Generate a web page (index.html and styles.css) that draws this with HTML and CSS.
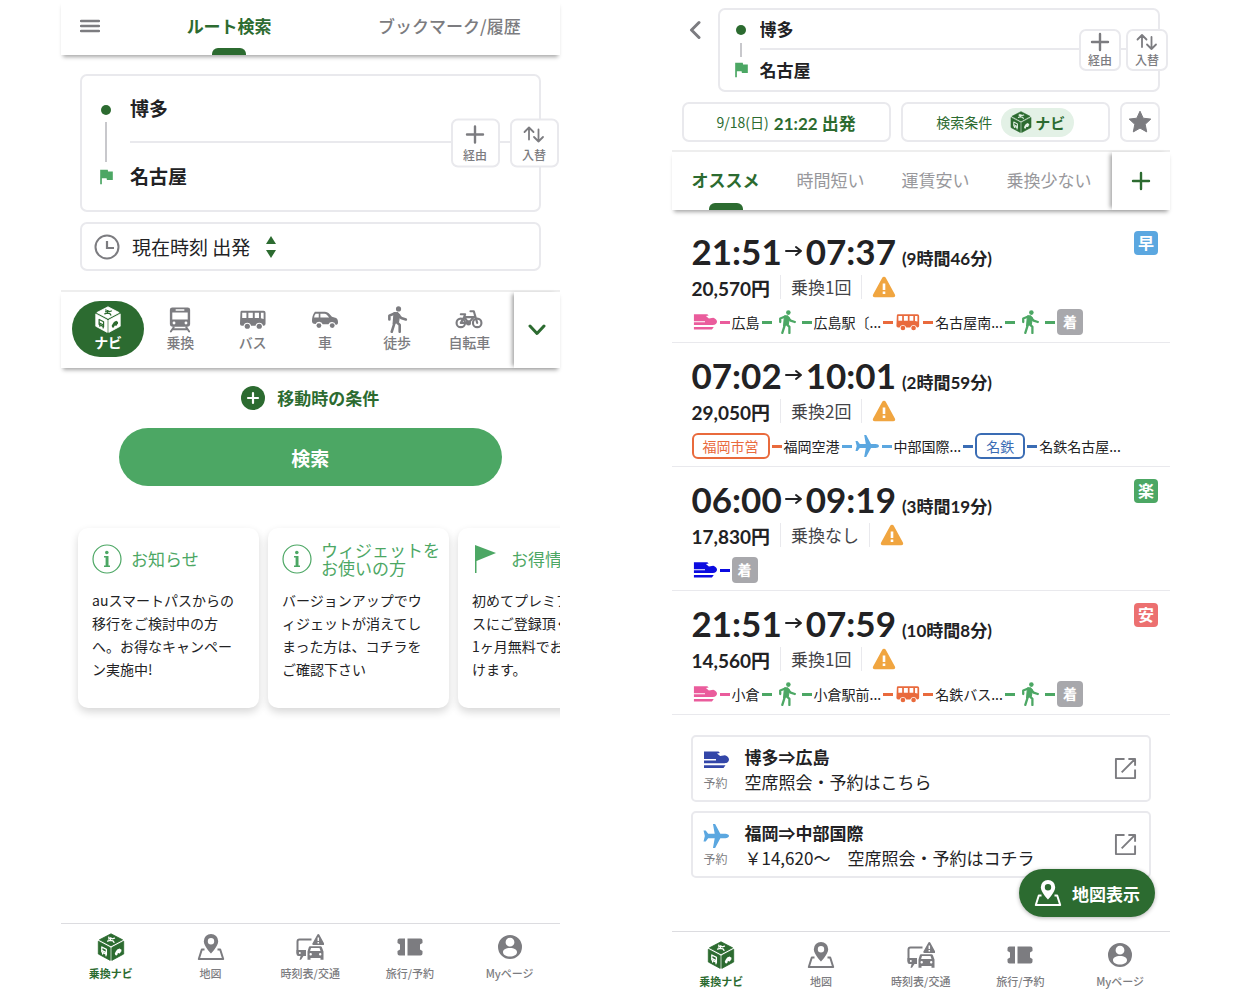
FILE: index.html
```html
<!DOCTYPE html>
<html lang="ja">
<head>
    <meta charset="UTF-8">
    <meta name="viewport" content="width=device-width, initial-scale=1.0">
    <title>乗換ナビ</title>
    <link rel="stylesheet" href="styles.css">
</head>
<body>
    <!-- Icon sprite -->
    <svg class="sprite" aria-hidden="true">
        <symbol id="i-cube" viewBox="0 0 28 28">
            <path fill="currentColor" stroke="currentColor" stroke-width=".8" stroke-linejoin="round" d="M14 .8 25.600 6.800 14 12.900 2.400 6.800zM1.300 8.200 13.200 14.600V27.400L1.300 21zM26.700 8.200 14.800 14.600V27.400L26.700 21z"/>
            <g class="cut-line" fill="none" stroke-width="1.300" stroke-linecap="round" stroke-linejoin="round">
                <path d="M11.500 6l2-1.200 1.800 1 2.200-.6M14 5.400l-1 2 3 .5 1 1.500M13 7.400l-2.400.8"/>
                <path d="M4.800 14l4.600 2.400v5L4.800 19z"/>
                <path d="M5.200 17.600l4 2.100M5.600 20v1M9 21.800v1"/>
            </g>
            <path class="cut-fill" d="M17.800 20.600l1-2 1.400-2 2.400-1.200 1 .8.8.4v1.800l-.9.500a1.200 1.200 0 0 1-2 1.200l-1.100.6a1.200 1.200 0 0 1-2.200 1z"/>
            <circle class="cut-fill" cx="11.800" cy="4.200" r=".8"/>
        </symbol>
        <symbol id="i-train" viewBox="0 0 28 28">
            <path fill="currentColor" fill-rule="evenodd" d="M6 1.500h16a2.500 2.500 0 0 1 2.500 2.500v15a2.500 2.500 0 0 1-2.500 2.500H6A2.500 2.500 0 0 1 3.500 19V4A2.500 2.500 0 0 1 6 1.500zM9.500 3.300v1.600h9V3.300zM6 6.800v7.200h16V6.800zM7.800 16.200a1.500 1.500 0 1 0 0 3 1.500 1.500 0 0 0 0-3zM20.200 16.200a1.500 1.500 0 1 0 0 3 1.500 1.500 0 0 0 0-3z"/>
            <path fill="none" stroke="currentColor" stroke-width="2" stroke-linecap="round" d="M7.500 22 4.500 26.500M20.500 22l3 4.500M7 24.200h14"/>
        </symbol>
        <symbol id="i-bus" viewBox="0 0 28 28">
            <path fill="currentColor" fill-rule="evenodd" d="M2 5h23a2 2 0 0 1 2 2v11.500a2 2 0 0 1-2 2h-.6a4 4 0 0 0-7.800 0h-4.600a4 4 0 0 0-7.800 0H2.500a2 2 0 0 1-2-2l.500-12A1.500 1.500 0 0 1 2 5zM2.800 7v5.500h4.400V7zM9.200 7v5.500h4.600V7zM15.800 7v5.500h4.400V7zM22.200 7v5.800l2.800.600V7z"/>
            <circle cx="8.100" cy="21" r="2.700" fill="currentColor"/>
            <circle cx="20.500" cy="21" r="2.700" fill="currentColor"/>
        </symbol>
        <symbol id="i-car" viewBox="0 0 28 28">
            <path fill="currentColor" fill-rule="evenodd" d="M3.500 6h10.500c3 0 5 2.600 7.200 5.200l4.300 1.200c1.500.6 2 2.600 2 4.600 0 1.800-.8 2.500-2.500 2.500a3.900 3.900 0 0 0-7.400-.5h-6a3.900 3.900 0 0 0-7.300-.3C1.500 18.500.5 17.500.5 15.500c0-3 .7-6.500 3-9.500zM4.300 8c-1 1.200-1.500 2.600-1.600 3.800h4.800V8zM9.200 8v3.800h9C16.600 9.600 15.200 8 13.500 8z"/>
            <circle cx="7.700" cy="20.300" r="2.500" fill="currentColor"/>
            <circle cx="21.500" cy="20.300" r="2.500" fill="currentColor"/>
        </symbol>
        <symbol id="i-walk" viewBox="1 1 23 23">
            <circle cx="13.800" cy="3.500" r="2.200" fill="currentColor"/>
            <path fill="none" stroke="currentColor" stroke-width="2.200" stroke-linecap="round" stroke-linejoin="round" d="M6 12.500V9.200L10.800 7.200M14 9l2 2.200 4 1.300M8 23l2.200-7M12.200 14.500l2.600 2.700V23"/>
            <path fill="currentColor" stroke="currentColor" stroke-width="1" stroke-linejoin="round" d="M10 6.800l3-.2 1.800 2-1 6-4.600 1.600z"/>
        </symbol>
        <symbol id="i-bike" viewBox="0 0 28 28">
            <g fill="none" stroke="currentColor" stroke-width="2.200" stroke-linecap="round" stroke-linejoin="round">
                <circle cx="5.500" cy="17.500" r="4.400"/>
                <circle cx="22.500" cy="17.500" r="4.400"/>
                <path d="M5.500 17.500 9 11.500h10M5.500 17.500h8L19.500 11M9 11.500l4.500 6M15.500 5.500h3.500l3.500 12M5.500 8.500h4.500l-1 3"/>
                <circle cx="13.500" cy="17.500" r="1.500"/>
            </g>
        </symbol>
        <symbol id="i-map" viewBox="0 0 28 28">
            <path fill="currentColor" fill-rule="evenodd" d="M14 1a7.200 7.200 0 0 1 7.200 7.200C21.200 13 14 20.500 14 20.500S6.800 13 6.800 8.200A7.200 7.200 0 0 1 14 1zM14 5a3.200 3.200 0 1 0 0 6.400A3.200 3.200 0 0 0 14 5z"/>
            <path fill="none" stroke="currentColor" stroke-width="2" stroke-linejoin="round" d="M7.500 16.500H4.800L1.800 26h24.400l-3-9.500h-2.700"/>
        </symbol>
        <symbol id="i-traffic" viewBox="0 0 28 28">
            <path fill="none" stroke="currentColor" stroke-width="2" stroke-linejoin="round" d="M15.500 6.500H3.500a2 2 0 0 0-2 2v12"/>
            <path fill="currentColor" d="M.5 17h9.500v6H7.500L5 26.800H3.500L4.600 23H2.500a2 2 0 0 1-2-2zM22.300 1a1 1 0 0 1 .9.500l5 9a1 1 0 0 1-.9 1.500H17.300a1 1 0 0 1-.9-1.500l5-9a1 1 0 0 1 .9-.5z"/>
            <path class="cut-line" stroke-width="1.500" d="M22.300 4.500v3.500M22.300 9v1.500"/>
            <circle class="cut-fill" cx="3.800" cy="20" r="1"/>
            <path fill="currentColor" fill-rule="evenodd" d="M14 13.300h10.500a1.500 1.500 0 0 1 1.400 1l1.600 4.200v8.300h-3V25H14.500v1.800h-3V18.500l1.300-4.200a1.500 1.500 0 0 1 1.200-1zM15 15.100l-.9 2.900h10.400l-1-2.900zM14.700 20a1.200 1.200 0 1 0 0 2.400 1.200 1.200 0 0 0 0-2.400zM24.200 20a1.200 1.200 0 1 0 0 2.400 1.200 1.200 0 0 0 0-2.400z"/>
        </symbol>
        <symbol id="i-ticket" viewBox="0 0 28 28">
            <path fill="currentColor" d="M3.500 5.500H9v17H3.500a2 2 0 0 1-2-2v-2.500l2.500-1.500v-5L1.500 10V7.500a2 2 0 0 1 2-2zM11.500 5.500h13a2 2 0 0 1 2 2V10L24 11.500v5l2.500 1.500v2.500a2 2 0 0 1-2 2h-13z"/>
        </symbol>
        <symbol id="i-user" viewBox="0 0 28 28">
            <path fill="currentColor" fill-rule="evenodd" d="M14 2a12 12 0 1 1 0 24 12 12 0 0 1 0-24zM14 4.800a4.400 4.400 0 1 0 0 8.800 4.400 4.400 0 0 0 0-8.800zM14 15c-4.500 0-7 1.800-7 4.200S10 23.500 14 23.500s7-1.900 7-4.300S18.500 15 14 15z"/>
        </symbol>
        <symbol id="i-flag" viewBox="4 3 17 19">
            <path fill="currentColor" d="M14.400 6 14 4H5v17h2v-7h5.600l.4 2h7V6z"/>
        </symbol>
        <symbol id="i-shinkansen" viewBox="0 0 26 26">
            <path fill="currentColor" d="M1 4.500h14.500l1.500 1.400-3 .6 3.200 2.600 4.800-.8c2.500.8 4 2.500 4 4.200 0 2.300-1.800 3.700-4.500 3.700H1v-2.800h12v-1.300H1zM1 18.300h21.500l-2 2.700H1z"/>
        </symbol>
        <symbol id="i-plane" viewBox="0 0 24 24">
            <path fill="currentColor" transform="rotate(90 12 12)" d="M23 14.800v-2l-9-4.800V3.300C14 1.600 13.100 0 12 0s-2 1.600-2 3.300V8L1 12.800v2l9-1.600v6l-3 2.300v2l5-1.200 5 1.200v-2l-3-2.300v-6z"/>
        </symbol>
        <symbol id="i-plus" viewBox="0 0 20 20">
            <path fill="none" stroke="currentColor" stroke-width="2.400" stroke-linecap="round" d="M10 2v16M2 10h16"/>
        </symbol>
        <symbol id="i-swap" viewBox="0 0 24 20">
            <path fill="none" stroke="currentColor" stroke-width="1.800" stroke-linecap="round" stroke-linejoin="round" d="M7 15V3M2.500 7.500 7 3l4.500 4.500M16.500 5v12M12 12.500l4.500 4.500 4.500-4.500"/>
        </symbol>
        <symbol id="i-warn" viewBox="0 0 24 22">
            <path fill="currentColor" d="M12 .8c.9 0 1.500.4 1.900 1.100l9 16.500c.8 1.400 0 2.800-1.700 2.800H2.800c-1.700 0-2.500-1.400-1.700-2.800l9-16.500C10.500 1.200 11.100.8 12 .8z"/>
            <path stroke="#fff" stroke-width="2.600" d="M12 7.500v6.500M12 15.500v2.400"/>
        </symbol>
        <symbol id="i-open" viewBox="0 0 24 24">
            <path fill="none" stroke="currentColor" stroke-width="2" stroke-linejoin="round" d="M11 2H2v20h20v-9M15 2h7v7M22 2 8 16"/>
        </symbol>
        <symbol id="i-info" viewBox="0 0 30 30">
            <circle cx="15" cy="15" r="14" fill="none" stroke="currentColor" stroke-width="1.200"/>
            <circle cx="14.800" cy="8.500" r="1.800" fill="currentColor"/>
            <path fill="currentColor" d="M12 12h4.500v9.500H18V23h-6v-1.500h1.600v-8H12z"/>
        </symbol>
    </svg>

    <main class="screens">
        <!-- Search screen -->
        <section class="phone">
            <header class="topbar">
                <button type="button" class="menu-btn" aria-label="メニュー">
                    <svg width="20" height="14" viewBox="0 0 20 14"><path stroke="currentColor" stroke-width="2.400" stroke-linecap="round" d="M1 2h18M1 7h18M1 12h18"/></svg>
                </button>
                <a href="#" class="top-tab active">ルート検索</a>
                <a href="#" class="top-tab">ブックマーク/履歴</a>
            </header>

            <div class="search-form">
                <div class="stations">
                    <div class="station">
                        <span class="marker"><span class="dot"></span></span>
                        <input type="text" value="博多" aria-label="出発地">
                    </div>
                    <div class="station">
                        <span class="marker"><svg class="flag"><use href="#i-flag"/></svg></span>
                        <input type="text" value="名古屋" aria-label="目的地">
                    </div>
                    <div class="station-actions">
                        <button type="button"><svg class="act-icon"><use href="#i-plus"/></svg>経由</button>
                        <button type="button"><svg class="act-icon swap"><use href="#i-swap"/></svg>入替</button>
                    </div>
                </div>

                <div class="time-box">
                    <svg width="26" height="26" viewBox="0 0 26 26" fill="none" stroke="currentColor" stroke-width="2"><circle cx="13" cy="13" r="11.500"/><path stroke-width="2.200" d="M13 7v7h7"/></svg>
                    <select aria-label="日時">
                        <option>現在時刻 出発</option>
                    </select>
                    <svg class="updown" width="10" height="24" viewBox="0 0 10 24"><path fill="currentColor" d="M5 1l5 8H0zM5 23l5-8H0z"/></svg>
                </div>
            </div>

            <div class="modes">
                <div class="mode-list">
                    <button type="button" class="mode active"><svg><use href="#i-cube"/></svg>ナビ</button>
                    <button type="button" class="mode"><svg><use href="#i-train"/></svg>乗換</button>
                    <button type="button" class="mode"><svg><use href="#i-bus"/></svg>バス</button>
                    <button type="button" class="mode"><svg><use href="#i-car"/></svg>車</button>
                    <button type="button" class="mode"><svg><use href="#i-walk"/></svg>徒歩</button>
                    <button type="button" class="mode"><svg><use href="#i-bike"/></svg>自転車</button>
                </div>
                <button type="button" class="side-btn narrow" aria-label="開く">
                    <svg width="18" height="12" viewBox="0 0 18 12"><path fill="none" stroke="currentColor" stroke-width="3" stroke-linecap="round" stroke-linejoin="round" d="M2 2l7 7.500L16 2"/></svg>
                </button>
            </div>

            <button type="button" class="conditions">
                <svg width="24" height="24" viewBox="0 0 24 24"><circle cx="12" cy="12" r="12" fill="currentColor"/><path stroke="#fff" stroke-width="2.200" stroke-linecap="round" d="M12 7v10M7 12h10"/></svg>
                移動時の条件
            </button>
            <button type="button" class="search-btn">検索</button>

            <div class="cards">
                <article class="card">
                    <h2><svg width="30" height="30"><use href="#i-info"/></svg>お知らせ</h2>
                    <p>auスマートパスからの<br>移行をご検討中の方<br>へ。お得なキャンペー<br>ン実施中!</p>
                </article>
                <article class="card">
                    <h2><svg width="30" height="30"><use href="#i-info"/></svg><span>ウィジェットを<br>お使いの方</span></h2>
                    <p>バージョンアップでウ<br>ィジェットが消えてし<br>まった方は、コチラを<br>ご確認下さい</p>
                </article>
                <article class="card">
                    <h2><svg width="30" height="30" viewBox="0 0 30 30"><path fill="currentColor" d="M3 1l21 8L4.500 17v12H3z"/></svg>お得情報</h2>
                    <p>初めてプレミアムコー<br>スにご登録頂くと最初<br>1ヶ月無料でお試し頂<br>けます。</p>
                </article>
            </div>

            <nav class="bottom-nav tall">
                <a href="#" class="active"><svg><use href="#i-cube"/></svg>乗換ナビ</a>
                <a href="#"><svg><use href="#i-map"/></svg>地図</a>
                <a href="#"><svg><use href="#i-traffic"/></svg>時刻表/交通</a>
                <a href="#"><svg><use href="#i-ticket"/></svg>旅行/予約</a>
                <a href="#"><svg><use href="#i-user"/></svg>Myページ</a>
            </nav>
        </section>

        <!-- Result screen -->
        <section class="phone">
            <div class="result-head">
                <button type="button" class="back-btn" aria-label="戻る">
                    <svg width="12" height="20" viewBox="0 0 12 20"><path fill="none" stroke="currentColor" stroke-width="3" stroke-linecap="round" stroke-linejoin="round" d="M10 2.500 2.500 10l7.500 7.500"/></svg>
                </button>
                <div class="stations compact">
                    <div class="station">
                        <span class="marker"><span class="dot"></span></span>
                        <input type="text" value="博多" aria-label="出発地">
                    </div>
                    <div class="station">
                        <span class="marker"><svg class="flag"><use href="#i-flag"/></svg></span>
                        <input type="text" value="名古屋" aria-label="目的地">
                    </div>
                    <div class="station-actions">
                        <button type="button"><svg class="act-icon"><use href="#i-plus"/></svg>経由</button>
                        <button type="button"><svg class="act-icon swap"><use href="#i-swap"/></svg>入替</button>
                    </div>
                </div>
            </div>

            <div class="chips">
                <button type="button" class="chip">9/18(日) <strong>21:22 出発</strong></button>
                <button type="button" class="chip">検索条件 <span class="navi-pill"><svg width="22" height="22"><use href="#i-cube"/></svg>ナビ</span></button>
                <button type="button" class="chip star" aria-label="ブックマーク">
                    <svg width="24" height="24" viewBox="0 0 24 24"><path fill="currentColor" stroke="currentColor" stroke-width="1" stroke-linejoin="round" d="M12 1.200l3.200 7 7.600.9-5.600 5.200 1.500 7.600L12 18.100l-6.700 3.800 1.500-7.600L1.200 9.100l7.600-.9z"/></svg>
                </button>
            </div>

            <div class="sorts">
                <div class="sort-list">
                    <a href="#" class="active">オススメ</a>
                    <a href="#">時間短い</a>
                    <a href="#">運賃安い</a>
                    <a href="#">乗換少ない</a>
                </div>
                <button type="button" class="side-btn" aria-label="追加">
                    <svg width="20" height="20"><use href="#i-plus"/></svg>
                </button>
            </div>

            <ul class="results">
                <li class="result">
                    <span class="badge fast">早</span>
                    <div class="times"><b>21:51</b><svg class="arrow" viewBox="0 0 18 14"><path d="M1 7h14M11 3l5 4-5 4"/></svg><b>07:37</b><small>(9時間46分)</small></div>
                    <div class="fare"><b>20,570円</b><span>乗換1回</span><svg><use href="#i-warn"/></svg></div>
                    <div class="route">
                        <svg class="pink"><use href="#i-shinkansen"/></svg><i class="pink"></i>広島<i class="walk"></i>
                        <svg class="walk"><use href="#i-walk"/></svg><i class="walk"></i>広島駅〔...<i class="bus"></i>
                        <svg class="bus"><use href="#i-bus"/></svg><i class="bus"></i>名古屋南...<i class="walk"></i>
                        <svg class="walk"><use href="#i-walk"/></svg><i class="walk"></i><span class="goal">着</span>
                    </div>
                </li>
                <li class="result">
                    <div class="times"><b>07:02</b><svg class="arrow" viewBox="0 0 18 14"><path d="M1 7h14M11 3l5 4-5 4"/></svg><b>10:01</b><small>(2時間59分)</small></div>
                    <div class="fare"><b>29,050円</b><span>乗換2回</span><svg><use href="#i-warn"/></svg></div>
                    <div class="route">
                        <span class="line-tag bus">福岡市営</span><i class="bus"></i>福岡空港<i class="air"></i>
                        <svg class="air"><use href="#i-plane"/></svg><i class="air"></i>中部国際...<i class="meitetsu"></i>
                        <span class="line-tag meitetsu">名鉄</span><i class="meitetsu"></i>名鉄名古屋...
                    </div>
                </li>
                <li class="result">
                    <span class="badge easy">楽</span>
                    <div class="times"><b>06:00</b><svg class="arrow" viewBox="0 0 18 14"><path d="M1 7h14M11 3l5 4-5 4"/></svg><b>09:19</b><small>(3時間19分)</small></div>
                    <div class="fare"><b>17,830円</b><span>乗換なし</span><svg><use href="#i-warn"/></svg></div>
                    <div class="route">
                        <svg class="blue"><use href="#i-shinkansen"/></svg><i class="blue"></i><span class="goal">着</span>
                    </div>
                </li>
                <li class="result">
                    <span class="badge cheap">安</span>
                    <div class="times"><b>21:51</b><svg class="arrow" viewBox="0 0 18 14"><path d="M1 7h14M11 3l5 4-5 4"/></svg><b>07:59</b><small>(10時間8分)</small></div>
                    <div class="fare"><b>14,560円</b><span>乗換1回</span><svg><use href="#i-warn"/></svg></div>
                    <div class="route">
                        <svg class="pink"><use href="#i-shinkansen"/></svg><i class="pink"></i>小倉<i class="walk"></i>
                        <svg class="walk"><use href="#i-walk"/></svg><i class="walk"></i>小倉駅前...<i class="bus"></i>
                        <svg class="bus"><use href="#i-bus"/></svg><i class="bus"></i>名鉄バス...<i class="walk"></i>
                        <svg class="walk"><use href="#i-walk"/></svg><i class="walk"></i><span class="goal">着</span>
                    </div>
                </li>
            </ul>

            <div class="bookings">
                <a href="#" class="booking">
                    <span class="booking-icon"><svg class="navy"><use href="#i-shinkansen"/></svg>予約</span>
                    <span class="booking-text"><strong>博多⇒広島</strong>空席照会・予約はこちら</span>
                    <svg class="open"><use href="#i-open"/></svg>
                </a>
                <a href="#" class="booking">
                    <span class="booking-icon"><svg class="air"><use href="#i-plane"/></svg>予約</span>
                    <span class="booking-text"><strong>福岡⇒中部国際</strong>￥14,620〜　空席照会・予約はコチラ</span>
                    <svg class="open"><use href="#i-open"/></svg>
                </a>
            </div>

            <button type="button" class="map-btn"><svg width="28" height="28"><use href="#i-map"/></svg>地図表示</button>

            <nav class="bottom-nav">
                <a href="#" class="active"><svg><use href="#i-cube"/></svg>乗換ナビ</a>
                <a href="#"><svg><use href="#i-map"/></svg>地図</a>
                <a href="#"><svg><use href="#i-traffic"/></svg>時刻表/交通</a>
                <a href="#"><svg><use href="#i-ticket"/></svg>旅行/予約</a>
                <a href="#"><svg><use href="#i-user"/></svg>Myページ</a>
            </nav>
        </section>
    </main>
</body>
</html>
```

FILE: styles.css
```css
:root {
    --green: #2c6b30;
    --light-green: #4ca764;
    --grey: #7c7c80;
    --text: #222224;
    --line: #e9e9ed;
    --cut: #fff;
}
* {
    box-sizing: border-box;
}
body {
    margin: 0;
    background: #fff;
    color: var(--text);
    font-family: "Noto Sans CJK JP", sans-serif;
}
button,
input,
select {
    font: inherit;
    color: inherit;
    background: none;
    border: 0;
    padding: 0;
    margin: 0;
}
button {
    cursor: pointer;
}
a {
    color: inherit;
    text-decoration: none;
}
svg {
    display: block;
    flex: none;
}
.sprite {
    position: absolute;
    width: 0;
    height: 0;
}
.cut-line {
    stroke: var(--cut);
}
.cut-fill {
    fill: var(--cut);
}
.screens {
    display: grid;
    grid-template-columns: 1fr 1fr;
    gap: 112px;
    padding: 0 68px 0 61px;
}
.phone {
    position: relative;
    display: flex;
    flex-direction: column;
    min-width: 0;
    min-height: 100vh;
}

/* Top tabs */
.topbar {
    display: flex;
    height: 55px;
    box-shadow: 0 4px 4px -2px rgba(0, 0, 0, 0.35);
}
.menu-btn {
    display: flex;
    align-items: center;
    justify-content: center;
    width: 58px;
    padding-bottom: 3px;
    color: var(--grey);
}
.top-tab {
    flex: 1;
    position: relative;
    text-align: center;
    font-size: 17px;
    line-height: 51px;
    font-weight: 500;
    color: var(--grey);
}
.top-tab.active {
    color: var(--green);
    font-weight: 700;
}
.top-tab.active::after,
.sort-list .active::after {
    content: "";
    position: absolute;
    left: 50%;
    bottom: 0;
    width: 34px;
    height: 7px;
    margin-left: -17px;
    border-radius: 6px 6px 0 0;
    background: var(--green);
}

/* Station box */
.search-form {
    display: flex;
    flex-direction: column;
    gap: 10px;
    padding: 19px 19px;
}
.stations,
.time-box,
.chip,
.booking {
    border: 2px solid var(--line);
    border-radius: 7px;
}
.stations {
    position: relative;
    flex: 1;
    padding: 0 0 0 15px;
}
.station {
    position: relative;
    display: flex;
    align-items: center;
    height: 67px;
}
.station input {
    flex: 1;
    min-width: 0;
    height: 100%;
    padding-bottom: 2px;
    font-size: 19px;
    font-weight: 700;
}
.station:first-child input {
    border-bottom: 2px solid var(--line);
}
.station:first-child::after {
    content: "";
    position: absolute;
    left: 8px;
    bottom: -19px;
    width: 2px;
    height: 40px;
    background: #c8c8cc;
}
.marker {
    width: 33px;
    padding-left: 4px;
}
.dot {
    display: block;
    width: 10px;
    height: 10px;
    border-radius: 50%;
    background: var(--green);
}
.flag {
    width: 15px;
    height: 16px;
    margin-left: -2px;
    color: var(--light-green);
}
.station-actions {
    position: absolute;
    right: -20px;
    top: 50%;
    transform: translateY(-50%);
    display: flex;
    gap: 10px;
}
.station-actions button {
    display: flex;
    flex-direction: column;
    align-items: center;
    justify-content: center;
    gap: 2px;
    width: 49px;
    height: 49px;
    border: 2px solid var(--line);
    border-radius: 7px;
    background: #fff;
    color: var(--grey);
    font-size: 12px;
    line-height: 16px;
    font-weight: 500;
}
.act-icon {
    width: 20px;
    height: 20px;
}
.act-icon.swap {
    width: 24px;
}
.compact {
    padding-left: 12px;
}
.compact .station {
    height: 40px;
}
.compact .station input {
    font-size: 17px;
}
.compact .station:first-child::after {
    bottom: -7px;
    height: 14px;
}
.compact .marker {
    width: 28px;
}
.compact .station-actions {
    right: -10px;
    gap: 5px;
}
.compact .station-actions button {
    width: 42px;
    height: 42px;
    gap: 0;
}

.time-box {
    display: flex;
    align-items: center;
    height: 49px;
    padding-left: 12px;
    color: var(--grey);
}
.time-box select {
    appearance: none;
    margin: 0 15px 0 12px;
    font-size: 19px;
    color: var(--text);
}
.updown {
    color: var(--green);
}

/* Transport modes */
.modes,
.sorts {
    display: flex;
    border-top: 2px solid #eee;
    box-shadow: 0 4px 4px -2px rgba(0, 0, 0, 0.35);
}
.modes {
    height: 78px;
}
.mode-list {
    flex: 1;
    display: grid;
    grid-template-columns: repeat(6, 1fr);
    padding: 9px 8px 0 11px;
}
.mode {
    display: flex;
    flex-direction: column;
    align-items: center;
    height: 56px;
    padding-top: 5px;
    color: var(--grey);
    font-size: 14px;
    line-height: 18px;
    font-weight: 500;
}
.mode svg {
    width: 28px;
    height: 27px;
}
.mode.active {
    --cut: var(--green);
    border-radius: 28px;
    background: var(--green);
    color: #fff;
    font-weight: 700;
}
.side-btn {
    display: flex;
    align-items: center;
    justify-content: center;
    width: 58px;
    color: var(--green);
    box-shadow: -4px 0 4px -2px rgba(0, 0, 0, 0.35);
}
.side-btn.narrow {
    width: 46px;
}

.conditions {
    align-self: center;
    display: flex;
    align-items: center;
    gap: 12px;
    margin: 18px 0;
    font-size: 17px;
    line-height: 24px;
    font-weight: 700;
    color: var(--green);
}
.search-btn {
    height: 58px;
    margin: 0 58px;
    border-radius: 29px;
    background: var(--light-green);
    color: #fff;
    font-size: 19px;
    font-weight: 700;
}

/* Info cards */
.cards {
    display: flex;
    gap: 9px;
    margin-top: 32px;
    padding: 10px 17px 16px;
    overflow: hidden;
}
.card {
    flex: none;
    width: 181px;
    height: 180px;
    padding: 12px 14px;
    border-radius: 10px;
    box-shadow: 0 4px 8px rgba(0, 0, 0, 0.16);
}
.card h2 {
    display: flex;
    align-items: center;
    gap: 9px;
    height: 38px;
    margin: 0 0 11px;
    font-size: 17px;
    line-height: 18px;
    font-weight: 400;
    color: var(--light-green);
    white-space: nowrap;
}
.card p {
    margin: 0;
    font-size: 14px;
    line-height: 23px;
    white-space: nowrap;
}

/* Bottom navigation */
.bottom-nav {
    display: grid;
    grid-template-columns: repeat(5, 1fr);
    margin-top: auto;
    padding: 9px 0 11px;
    border-top: 1px solid #dcdce0;
}
.bottom-nav.tall {
    padding-bottom: 19px;
}
.bottom-nav a {
    display: flex;
    flex-direction: column;
    align-items: center;
    gap: 4px;
    color: var(--grey);
    font-size: 11px;
    line-height: 16px;
    font-weight: 500;
}
.bottom-nav svg {
    width: 28px;
    height: 28px;
}
.bottom-nav .active {
    color: var(--green);
    font-weight: 700;
}

/* Result header */
.result-head {
    display: flex;
    align-items: flex-start;
    padding: 8px 10px 0 0;
}
.back-btn {
    display: flex;
    justify-content: center;
    width: 46px;
    padding-top: 12px;
    color: var(--grey);
}
.chips {
    display: flex;
    gap: 10px;
    padding: 10px 10px 8px;
}
.chip {
    flex: 1;
    display: flex;
    align-items: center;
    justify-content: center;
    gap: 5px;
    height: 40px;
    color: var(--green);
    font-size: 14px;
}
.chip strong {
    font-family: Lato, "Noto Sans CJK JP", sans-serif;
    font-size: 17px;
}
.chip.star {
    flex: none;
    width: 40px;
    color: var(--grey);
}
.navi-pill {
    --cut: #e3f1e6;
    display: flex;
    align-items: center;
    gap: 3px;
    height: 29px;
    margin-left: 4px;
    padding: 0 9px;
    border-radius: 15px;
    background: var(--cut);
    font-size: 15px;
    font-weight: 700;
}

/* Sort tabs */
.sorts {
    height: 60px;
}
.sort-list {
    flex: 1;
    display: flex;
    gap: 37px;
    padding-left: 20px;
    white-space: nowrap;
}
.sort-list a {
    position: relative;
    font-size: 17px;
    line-height: 56px;
    color: #98989c;
}
.sort-list .active {
    color: var(--green);
    font-weight: 700;
}

/* Results */
.results {
    list-style: none;
    margin: 0;
    padding: 9px 0 0;
}
.result {
    position: relative;
    padding: 12px 20px 6px;
    border-bottom: 1px solid var(--line);
}
.badge {
    position: absolute;
    top: 12px;
    right: 12px;
    width: 24px;
    height: 24px;
    border-radius: 4px;
    color: #fff;
    font-size: 16px;
    line-height: 23px;
    font-weight: 700;
    text-align: center;
}
.fast {
    background: #5ba7e0;
}
.easy {
    background: var(--light-green);
}
.cheap {
    background: #ec7070;
}
.times {
    display: flex;
    align-items: baseline;
    height: 40px;
    line-height: 40px;
    font-family: Lato, "Noto Sans CJK JP", sans-serif;
}
.times b {
    font-size: 35px;
    font-weight: 700;
}
.times small {
    margin-left: 6px;
    font-size: 17px;
    font-weight: 700;
}
.arrow {
    align-self: center;
    width: 18px;
    height: 14px;
    margin: 0 3px;
    fill: none;
    stroke: var(--text);
    stroke-width: 2;
    stroke-linecap: round;
    stroke-linejoin: round;
}
.fare {
    display: flex;
    align-items: center;
    height: 24px;
    margin: 4px 0 9px;
    font-size: 17px;
}
.fare b {
    font-family: Lato, "Noto Sans CJK JP", sans-serif;
    font-size: 19px;
    font-weight: 700;
}
.fare span {
    margin: 0 10px;
    padding: 0 10px;
    border-left: 1px solid var(--line);
    border-right: 1px solid var(--line);
    line-height: 24px;
    color: #444448;
}
.fare svg {
    width: 24px;
    height: 22px;
    color: #f0a540;
}
.route {
    display: flex;
    align-items: center;
    gap: 2px;
    height: 28px;
    font-size: 14px;
    white-space: nowrap;
}
.route svg {
    width: 26px;
    height: 24px;
}
.route i {
    flex: none;
    width: 10px;
    height: 3px;
    background: currentColor;
}
.pink {
    color: #ea5c9c;
}
.walk {
    color: var(--light-green);
}
.bus {
    color: #e96a3c;
}
.air {
    color: #5ba7e0;
}
.meitetsu {
    color: #3a6cb4;
}
.blue {
    color: #0b0be0;
}
.navy {
    color: #3346a8;
}
.line-tag {
    padding: 0 9px;
    border: 2px solid currentColor;
    border-radius: 6px;
    line-height: 22px;
}
.goal {
    width: 26px;
    height: 26px;
    border-radius: 4px;
    background: #a8a8ac;
    color: #fff;
    line-height: 25px;
    font-weight: 700;
    text-align: center;
}

/* Booking links */
.bookings {
    display: flex;
    flex-direction: column;
    gap: 9px;
    padding: 20px 19px;
}
.booking {
    display: flex;
    align-items: center;
    height: 67px;
    padding: 0 12px 0 9px;
    border-radius: 5px;
}
.booking-icon {
    display: flex;
    flex-direction: column;
    align-items: center;
    gap: 2px;
    width: 28px;
    margin-right: 15px;
    color: var(--grey);
    font-size: 12px;
    line-height: 16px;
}
.booking-icon svg {
    width: 28px;
    height: 26px;
}
.booking-text {
    flex: 1;
    font-size: 17px;
    line-height: 25px;
    white-space: nowrap;
}
.booking-text strong {
    display: block;
}
.open {
    width: 23px;
    height: 23px;
    color: var(--grey);
}
.map-btn {
    position: absolute;
    right: 15px;
    bottom: 83px;
    display: flex;
    align-items: center;
    gap: 10px;
    height: 48px;
    padding: 0 15px;
    border-radius: 24px;
    background: var(--green);
    color: #fff;
    font-size: 17px;
    font-weight: 700;
    box-shadow: 0 1px 4px rgba(0, 0, 0, 0.3);
}
```
